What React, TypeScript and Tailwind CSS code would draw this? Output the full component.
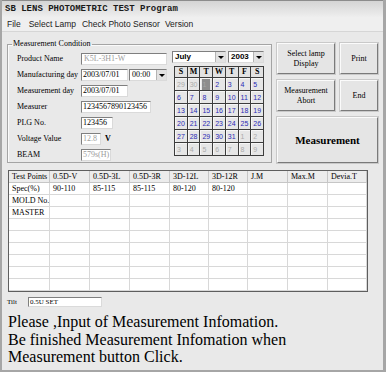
import React from 'react';

const sunken = 'bg-white border border-t-[#7f7f7f] border-l-[#7f7f7f] border-r-[#dadada] border-b-[#dadada]';
const serif = "font-['Liberation_Serif',serif]";

const DropBtn = () => (
  <div className="w-[10px] h-full bg-[#e2e2e2] border-l border-[#b4b4b4] flex items-center justify-center">
    <div className="w-0 h-0 border-l-[3px] border-r-[3px] border-t-[3px] border-l-transparent border-r-transparent border-t-black" />
  </div>
);

const Row = ({ label, children }: { label: string; children: React.ReactNode }) => (
  <div className="flex items-center h-[12px]">
    <div className="w-[64px] text-[8px] leading-[10px]">{label}</div>
    {children}
  </div>
);

const Btn = ({ className, children }: { className: string; children: React.ReactNode }) => (
  <div
    className={`flex items-center justify-center text-center bg-[#e5e5e5] border border-t-[#fbfbfb] border-l-[#fbfbfb] border-r-[#7a7a7a] border-b-[#7a7a7a] shadow-[0_0_0_1px_#c9c9c9] ${className}`}
  >
    {children}
  </div>
);

const weeks = [
  [29, 30, 1, 2, 3, 4, 5],
  [6, 7, 8, 9, 10, 11, 12],
  [13, 14, 15, 16, 17, 18, 19],
  [20, 21, 22, 23, 24, 25, 26],
  [27, 28, 29, 30, 31, 1, 2],
  [3, 4, 5, 6, 7, 8, 9],
];

const Calendar = () => (
  <div className="ml-[5px] w-[92px]">
    <div className="flex gap-[2px] h-[12px]">
      <div className={`${sunken} w-[54px] flex items-stretch`}>
        <div className="flex-1 pl-[2px] text-[8px] leading-[10px] font-bold font-['Liberation_Sans',sans-serif]">July</div>
        <DropBtn />
      </div>
      <div className={`${sunken} w-[36px] flex items-stretch`}>
        <div className="flex-1 pl-[2px] text-[8px] leading-[10px] font-bold font-['Liberation_Sans',sans-serif]">2003</div>
        <DropBtn />
      </div>
    </div>
    <div className="ml-[2px] mt-[3px] w-[90px] grid grid-cols-7 gap-[1px] p-[1px] bg-[#3c3c3c]">
      {['S', 'M', 'T', 'W', 'T', 'F', 'S'].map((d, i) => (
        <div key={i} className="h-[10px] bg-[#e2e2e2] text-center text-[8px] leading-[10px] font-bold">
          {d}
        </div>
      ))}
      {weeks.map((w, r) =>
        w.map((d, c) => {
          const other = (r === 0 && d > 20) || (r >= 4 && d < 10);
          const sel = r === 0 && d === 1;
          return (
            <div
              key={`${r}-${c}`}
              className={`h-[12px] bg-[#e6e6e6] border-t border-l border-[#f6f6f6] text-[7px] leading-[11px] pl-[1px] font-['Liberation_Sans',sans-serif] ${
                other ? 'text-[#ababab]' : 'text-[#2b2bb5]'
              }`}
            >
              {sel ? <div className="w-[8px] h-full bg-[#8c8c8c] text-[#a4a4a4]">1</div> : d}
            </div>
          );
        })
      )}
    </div>
  </div>
);

const cols = ['Test Points', '0.5D-V', '0.5D-3L', '0.5D-3R', '3D-12L', '3D-12R', 'J.M', 'Max.M', 'Devia.T'];
const rows = [
  ['Spec(%)', '90-110', '85-115', '85-115', '80-120', '80-120', '', '', ''],
  ['MOLD No.', '', '', '', '', '', '', '', ''],
  ['MASTER', '', '', '', '', '', '', '', ''],
  ...Array.from({ length: 6 }, () => Array(9).fill('')),
];

export default function App() {
  return (
    <div className={`w-[386px] h-[372px] overflow-hidden flex flex-col bg-[#e9e9e9] border-l-2 border-b-2 border-r-[3px] border-[#a6a6a6] text-black ${serif}`}>
      <div className="h-[17px] shrink-0 flex items-center pl-[3px] border-t border-[#8c8c8c] bg-linear-to-b from-[#d4d4d4] to-[#eeeeee] font-['Liberation_Mono',monospace] font-bold text-[9px] leading-[10px] text-[#1a1a1a]">
        SB LENS PHOTOMETRIC TEST Program
      </div>
      <div className="h-[15px] shrink-0 flex items-center pl-[5px] bg-[#efefef] border-b border-[#d6d6d6] font-['Liberation_Sans',sans-serif] text-[8.5px] leading-[10px] text-[#222]">
        <span>File</span>
        <span className="ml-[8px]">Select Lamp</span>
        <span className="ml-[6px]">Check Photo Sensor</span>
        <span className="ml-[5px]">Version</span>
      </div>

      <div className="flex-1 pl-[5px]">
        <div className="mt-[7px] flex items-start">
          <fieldset className="w-[265px] h-[124px] border border-[#a4a4a4] shadow-[inset_1px_1px_0_#fafafa]">
            <legend className="ml-[4px] px-[1px] text-[8px] leading-[10px]">Measurement Condition</legend>
            <div className="flex pl-[9px] pt-[2px]">
              <div className="w-[150px] pt-[2px] flex flex-col gap-[4px]">
                <Row label="Product Name">
                  <div className={`${sunken} w-[86px] h-[12px] pl-[2px] text-[8px] leading-[10px] text-[#9c9c9c]`}>K5L-3H1-W</div>
                </Row>
                <Row label="Manufacturing day">
                  <div className={`${sunken} w-[47px] h-[12px] pl-[1px] text-[8px] leading-[10px]`}>2003/07/01</div>
                  <div className={`${sunken} ml-[1px] w-[38px] h-[12px] flex items-stretch`}>
                    <div className="flex-1 pl-[2px] text-[8px] leading-[10px]">00:00</div>
                    <DropBtn />
                  </div>
                </Row>
                <Row label="Measurement day">
                  <div className={`${sunken} w-[47px] h-[12px] pl-[1px] text-[8px] leading-[10px]`}>2003/07/01</div>
                </Row>
                <Row label="Measurer">
                  <div className={`${sunken} w-[70px] h-[12px] pl-[1px] text-[8px] leading-[10px]`}>1234567890123456</div>
                </Row>
                <Row label="PLG No.">
                  <div className={`${sunken} w-[32px] h-[12px] pl-[1px] text-[8px] leading-[10px]`}>123456</div>
                </Row>
                <Row label="Voltage Value">
                  <div className={`${sunken} w-[20px] h-[12px] pl-[1px] text-[8px] leading-[10px] text-[#9c9c9c]`}>12.8</div>
                  <span className="ml-[4px] text-[8px] leading-[10px] font-bold">V</span>
                </Row>
                <Row label="BEAM">
                  <div className={`${sunken} w-[30px] h-[12px] pl-[1px] text-[8px] leading-[10px] text-[#9c9c9c]`}>579s(H)</div>
                </Row>
              </div>
              <Calendar />
            </div>
          </fieldset>

          <div className="ml-[5px] mt-[4px] w-[101px] flex flex-col gap-[6px] text-[8px] leading-[10px]">
            <div className="flex gap-[5px]">
              <Btn className="w-[58px] h-[31px]">
                Select lamp
                <br />
                Display
              </Btn>
              <Btn className="w-[38px] h-[31px]">Print</Btn>
            </div>
            <div className="flex gap-[5px]">
              <Btn className="w-[58px] h-[31px]">
                Measurement
                <br />
                Abort
              </Btn>
              <Btn className="w-[38px] h-[31px]">End</Btn>
            </div>
            <Btn className="w-[101px] h-[46px] text-[11px] font-bold">Measurement</Btn>
          </div>
        </div>

        <div className="ml-[1px] mt-[7px] w-[360px] h-[122px] overflow-hidden bg-white border border-t-[#5e5e5e] border-l-[#5e5e5e] border-r-[#5e5e5e] border-b-[#5e5e5e]">
          <div className="grid grid-cols-[41px_40px_40px_40px_39px_39px_40px_40px_39px] text-[8px] leading-[11px]">
            {cols.map((c, i) => (
              <div key={i} className="h-[12px] pl-[3px] bg-[#ececec] border-r border-b border-[#c6c6c6] whitespace-nowrap">
                {c}
              </div>
            ))}
            {rows.map((r, ri) =>
              r.map((c, ci) => (
                <div key={`${ri}-${ci}`} className="h-[12px] pl-[3px] border-r border-b border-[#d8d8d8] whitespace-nowrap">
                  {c}
                </div>
              ))
            )}
          </div>
        </div>

        <div className="mt-[5px] flex items-center h-[10px]">
          <span className="w-[21px] text-[7px] leading-[10px]">Tilt</span>
          <div className={`${sunken} w-[74px] h-[10px] pl-[1px] text-[7px] leading-[8px]`}>0.5U SET</div>
        </div>

        <div className="mt-[6px] ml-[1px] text-[16px] leading-[17.5px]">
          <div>Please ,Input of Measurement Infomation.</div>
          <div>Be finished Measurement Infomation when</div>
          <div>Measurement button Click.</div>
        </div>
      </div>
    </div>
  );
}
